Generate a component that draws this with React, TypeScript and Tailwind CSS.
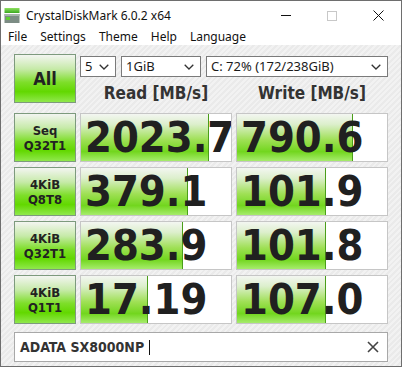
import React from 'react';

type Result = { label: [string, string]; read: string; readBar: number; write: string; writeBar: number };

const results: Result[] = [
  { label: ['Seq', 'Q32T1'], read: '2023.7', readBar: 128, write: '790.6', writeBar: 116 },
  { label: ['4KiB', 'Q8T8'], read: '379.1', readBar: 107, write: '101.9', writeBar: 89 },
  { label: ['4KiB', 'Q32T1'], read: '283.9', readBar: 102, write: '101.8', writeBar: 89 },
  { label: ['4KiB', 'Q1T1'], read: '17.19', readBar: 67, write: '107.0', writeBar: 89 },
];

const Chevron = () => (
  <svg width="10" height="6" viewBox="0 0 10 6" className="shrink-0">
    <path d="M0.7 0.7 L5 5 L9.3 0.7" fill="none" stroke="#333" strokeWidth="1.3" />
  </svg>
);

const Select = ({ value, width }: { value: string; width: string }) => (
  <div className={`${width} h-[21px] bg-white border border-[#7a7a7a] flex items-center justify-between pl-[4px] pr-[6px] text-[13px] text-[#1a1a1a] font-['Noto_Sans',sans-serif]`}>
    <span className="leading-none">{value}</span>
    <Chevron />
  </div>
);

const ResultBox = ({ value, bar }: { value: string; bar: number }) => (
  <div className="relative w-[152px] h-[49px] bg-white border border-[#c6c6c6] overflow-hidden flex items-center">
    <div
      className="absolute left-0 top-0 bottom-0 border-r border-[#4a9e1a] bg-[linear-gradient(to_bottom,#f3f6f1_0%,#dcefcc_22%,#9fe055_55%,#72d61e_80%,#a6ec6c_100%)]"
      style={{ width: bar }}
    />
    <span className="relative pl-[4px] text-[43px] leading-none font-bold text-[#202020] font-['DejaVu_Sans_Condensed','DejaVu_Sans',sans-serif] whitespace-nowrap">
      {value}
    </span>
  </div>
);

const LabelButton = ({ children, big }: { children: React.ReactNode; big?: boolean }) => (
  <div
    className={`w-[62px] h-[49px] shrink-0 border border-[#7d9a7d] bg-[linear-gradient(to_bottom,#f3f5f1_0%,#c6eaa8_30%,#7ede2a_58%,#62d800_78%,#90e84c_100%)] flex flex-col items-center justify-center text-[#222] font-bold font-['DejaVu_Sans_Condensed','DejaVu_Sans',sans-serif] ${big ? 'text-[18px]' : 'text-[13px] leading-[15px]'}`}
  >
    {children}
  </div>
);

export default function App() {
  return (
    <div className="w-[402px] h-[367px] border border-[#6e6e6e] bg-white flex flex-col overflow-hidden font-['Noto_Sans',sans-serif] text-[#111]">
      {/* title bar */}
      <div className="h-[29px] flex items-center">
        <svg width="16" height="16" viewBox="0 0 16 16" className="ml-[3px] mr-[6px]">
          <defs>
            <linearGradient id="g" x1="0" y1="0" x2="0" y2="1">
              <stop offset="0" stopColor="#8fe060" />
              <stop offset="1" stopColor="#3aa820" />
            </linearGradient>
          </defs>
          <rect x="0.5" y="0" width="15" height="5" fill="url(#g)" />
          <rect x="0.5" y="6" width="15" height="9" fill="#7c8c84" />
          <rect x="0.5" y="6" width="15" height="2" fill="#a9b4ae" />
          <rect x="2" y="9" width="4" height="3" fill="#5fd030" />
        </svg>
        <span className="text-[12px] text-[#111]">CrystalDiskMark 6.0.2 x64</span>
        <div className="ml-auto flex items-center">
          <div className="w-[46px] flex justify-center">
            <div className="w-[10px] h-[1px] bg-[#111]" />
          </div>
          <div className="w-[46px] flex justify-center">
            <div className="w-[10px] h-[10px] border border-[#c8c8c8]" />
          </div>
          <div className="w-[46px] flex justify-center">
            <svg width="11" height="11" viewBox="0 0 11 11">
              <path d="M0.5 0.5 L10.5 10.5 M10.5 0.5 L0.5 10.5" stroke="#111" strokeWidth="1" />
            </svg>
          </div>
        </div>
      </div>

      {/* menu bar */}
      <div className="h-[15px] flex items-center text-[12px] text-[#111] pl-[7px] gap-[13px] -mt-[1px]">
        <span>File</span>
        <span>Settings</span>
        <span>Theme</span>
        <span>Help</span>
        <span>Language</span>
      </div>

      {/* content */}
      <div className="flex-1 mt-[1px] bg-[repeating-linear-gradient(135deg,#f2f2f2_0px,#f2f2f2_2px,#eaeaea_2px,#eaeaea_4px)] pl-[13px] pt-[9px]">
        <div className="flex gap-[4px]">
          <LabelButton big>All</LabelButton>
          <div className="flex flex-col">
            <div className="flex gap-[5px] mt-[2px]">
              <Select value="5" width="w-[36px]" />
              <Select value="1GiB" width="w-[80px]" />
              <Select value="C: 72% (172/238GiB)" width="w-[182px]" />
            </div>
            <div className="flex gap-[4px] h-[31px] items-center pt-[2px] text-[17px] font-bold text-[#333] font-['DejaVu_Sans_Condensed','DejaVu_Sans',sans-serif]">
              <div className="w-[152px] text-center">Read [MB/s]</div>
              <div className="w-[152px] text-center">Write [MB/s]</div>
            </div>
          </div>
        </div>

        <div className="flex flex-col gap-[5px] mt-[5px]">
          {results.map((r) => (
            <div key={r.label.join('-')} className="flex gap-[4px]">
              <LabelButton>
                <span>{r.label[0]}</span>
                <span>{r.label[1]}</span>
              </LabelButton>
              <ResultBox value={r.read} bar={r.readBar} />
              <ResultBox value={r.write} bar={r.writeBar} />
            </div>
          ))}
        </div>

        <div className="mt-[8px] w-[374px] h-[30px] bg-white border border-[#a8a8a8] flex items-center pl-[5px] pr-[8px]">
          <span className="text-[14px] font-bold text-[#333] font-['DejaVu_Sans_Condensed','DejaVu_Sans',sans-serif]">ADATA SX8000NP</span>
          <div className="w-[1px] h-[15px] bg-[#111] ml-[5px]" />
          <svg width="12" height="12" viewBox="0 0 12 12" className="ml-auto">
            <path d="M1 1 L11 11 M11 1 L1 11" stroke="#444" strokeWidth="1.6" />
          </svg>
        </div>
      </div>
    </div>
  );
}
